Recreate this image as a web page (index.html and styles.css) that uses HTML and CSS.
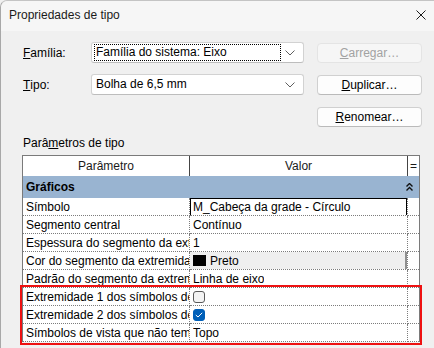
FILE: index.html
```html
<!DOCTYPE html>
<html lang="pt">
<head>
    <meta charset="UTF-8">
    <title>Propriedades de tipo</title>
    <link rel="stylesheet" href="styles.css">
</head>
<body>
<div class="dialog">
    <div class="titlebar">
        <span class="title">Propriedades de tipo</span>
        <svg class="close" width="10" height="10" viewBox="0 0 10 10">
            <path d="M0.5 0.5 L9.5 9.5 M9.5 0.5 L0.5 9.5" stroke="#1b1b1b" stroke-width="1" fill="none"/>
        </svg>
    </div>

    <div class="content">
        <div class="form">
            <label class="lbl"><u>F</u>amília:</label>
            <div class="combo">
                <span class="combo-text focused">Família do sistema: Eixo</span>
                <svg class="chev" width="10" height="6" viewBox="0 0 10 6"><path d="M0.5 0.5 L5 5 L9.5 0.5" stroke="#5f5f5f" fill="none"/></svg>
            </div>
            <button class="btn" disabled><u>C</u>arregar…</button>

            <label class="lbl"><u>T</u>ipo:</label>
            <div class="combo">
                <span class="combo-text">Bolha de 6,5 mm</span>
                <svg class="chev" width="10" height="6" viewBox="0 0 10 6"><path d="M0.5 0.5 L5 5 L9.5 0.5" stroke="#5f5f5f" fill="none"/></svg>
            </div>
            <button class="btn"><u>D</u>uplicar…</button>

            <span></span>
            <span></span>
            <button class="btn"><u>R</u>enomear…</button>
        </div>

        <div class="section-label">Parâ<u>m</u>etros de tipo</div>

        <div class="grid">
            <div class="row head">
                <div class="cell">Parâmetro</div>
                <div class="cell">Valor</div>
                <div class="cell eq">=</div>
            </div>
            <div class="group">
                <span>Gráficos</span>
                <svg class="collapse" width="7" height="8" viewBox="0 0 7 8">
                    <path d="M0.5 3.5 L3.5 0.5 L6.5 3.5 M0.5 7.5 L3.5 4.5 L6.5 7.5" stroke="#111" stroke-width="1.4" fill="none"/>
                </svg>
            </div>
            <div class="row">
                <div class="cell"><span class="txt">Símbolo</span></div>
                <div class="cell"><span class="editbox">M_Cabeça da grade - Círculo</span></div>
                <div class="cell"></div>
            </div>
            <div class="row">
                <div class="cell"><span class="txt">Segmento central</span></div>
                <div class="cell"><span class="txt">Contínuo</span></div>
                <div class="cell"></div>
            </div>
            <div class="row">
                <div class="cell"><span class="txt">Espessura do segmento da extremidade</span></div>
                <div class="cell"><span class="txt">1</span></div>
                <div class="cell"></div>
            </div>
            <div class="row">
                <div class="cell"><span class="txt">Cor do segmento da extremidade</span></div>
                <div class="cell"><span class="colorbtn"><span class="swatch"></span>Preto</span></div>
                <div class="cell"></div>
            </div>
            <div class="row">
                <div class="cell"><span class="txt">Padrão do segmento da extremidade</span></div>
                <div class="cell"><span class="txt">Linha de eixo</span></div>
                <div class="cell"></div>
            </div>
            <div class="highlight">
                <div class="row">
                    <div class="cell"><span class="txt">Extremidade 1 dos símbolos de bolha</span></div>
                    <div class="cell"><span class="check"></span></div>
                    <div class="cell"></div>
                </div>
                <div class="row">
                    <div class="cell"><span class="txt">Extremidade 2 dos símbolos de bolha</span></div>
                    <div class="cell">
                        <span class="check on">
                            <svg width="8" height="6" viewBox="0 0 8 6"><path d="M0.8 3 L3 5 L7.2 0.8" stroke="#fff" stroke-width="1" fill="none"/></svg>
                        </span>
                    </div>
                    <div class="cell"></div>
                </div>
                <div class="row">
                    <div class="cell"><span class="txt">Símbolos de vista que não tem plano</span></div>
                    <div class="cell"><span class="txt">Topo</span></div>
                    <div class="cell"></div>
                </div>
            </div>
        </div>
    </div>
</div>
</body>
</html>
```

FILE: styles.css
```css
body {
    margin: 0;
    width: 434px;
    height: 348px;
    overflow: hidden;
    background-color: #f0f0f0;
    font-family: "Liberation Sans", Arial, sans-serif;
    font-size: 12px;
    color: #000;
}
.dialog {
    width: 460px;
    height: 360px;
    background-color: #f0f0f0;
    border-left: 1px solid #a8a8a8;
    border-top: 1px solid #c4c4c4;
    border-top-left-radius: 7px;
    box-sizing: border-box;
}
.titlebar {
    height: 30px;
    background-color: #f6f6f6;
    border-top-left-radius: 7px;
    display: flex;
    align-items: center;
    position: relative;
}
.title {
    margin-left: 8px;
    margin-top: -2px;
    color: #1a1a1a;
}
.close {
    position: absolute;
    left: 415px;
    top: 9px;
}
.content {
    padding: 11px 0 0 21px;
}
.form {
    display: grid;
    grid-template-columns: 56px 213px 105px;
    grid-auto-rows: 21px;
    column-gap: 13px;
    row-gap: 11px;
}
.lbl {
    display: flex;
    align-items: center;
    padding-left: 1px;
}
.combo {
    background-color: #fff;
    border: 1px solid #d2d2d2;
    border-bottom-color: #bdbdbd;
    border-radius: 3px;
    display: flex;
    align-items: center;
    padding: 0 8px 0 2px;
    box-sizing: border-box;
}
.combo-text {
    flex: 1;
    padding: 0 1px;
    line-height: 15px;
    border: 1px solid transparent;
    margin-right: 4px;
}
.combo-text.focused {
    border: 1px dotted #000;
}
.chev {
    flex: none;
}
.btn {
    font: inherit;
    color: #000;
    background-color: #fdfdfd;
    border: 1px solid #d0d0d0;
    border-bottom-color: #bababa;
    border-radius: 4px;
    padding: 0;
    margin-top: 1px;
}
.btn:disabled {
    background-color: #f6f6f6;
    border-color: #e4e4e4;
    color: #a2a2a2;
}
.section-label {
    margin-top: 8px;
    margin-left: 1px;
    line-height: 16px;
    height: 16px;
}
.grid {
    margin-top: 4px;
    width: 398px;
    border: 1px solid #7a7a7a;
    border-bottom: none;
    background-color: #fff;
    box-sizing: border-box;
}
.row {
    display: grid;
    grid-template-columns: 167px 218px 11px;
    height: 18px;
}
.cell {
    border-right: 1px dotted #7c7c7c;
    border-bottom: 1px dotted #7c7c7c;
    box-sizing: border-box;
    white-space: nowrap;
    overflow: hidden;
    padding-left: 3px;
    line-height: 16px;
    display: flex;
    align-items: center;
}
.cell:last-child {
    border-right: none;
}
.txt {
    min-width: 0;
    overflow: hidden;
    white-space: nowrap;
}
.row.head {
    height: 20px;
}
.row.head .cell {
    border-right: 1px solid #444;
    border-bottom: none;
    justify-content: center;
    padding-left: 0;
    color: #1a1a1a;
}
.row.head .cell.eq {
    border-right: none;
}
.group {
    height: 22px;
    background-color: #99b4d1;
    display: flex;
    align-items: center;
    justify-content: space-between;
    padding: 0 6px 0 3px;
    font-weight: bold;
}
.editbox {
    margin-left: -3px;
    width: 217px;
    height: 18px;
    margin-top: 1px;
    border: 1px solid #000;
    padding-left: 2px;
    box-sizing: border-box;
    line-height: 16px;
}
.colorbtn {
    margin-left: -3px;
    width: 217px;
    height: 17px;
    background-color: #efefef;
    border-right: 2px solid #8f8f8f;
    box-sizing: border-box;
    display: flex;
    align-items: center;
    padding-left: 3px;
}
.swatch {
    width: 13px;
    height: 11px;
    background-color: #000;
    margin-right: 4px;
}
.check {
    width: 12px;
    height: 12px;
    border: 1px solid #5a5a5a;
    border-radius: 3px;
    background-color: #f4f4f4;
    box-sizing: border-box;
    display: flex;
    align-items: center;
    justify-content: center;
}
.check.on {
    background-color: #005fb8;
    border-color: #005fb8;
}
.highlight {
    outline: 2px solid #ee1111;
    outline-offset: 1px;
}
```
